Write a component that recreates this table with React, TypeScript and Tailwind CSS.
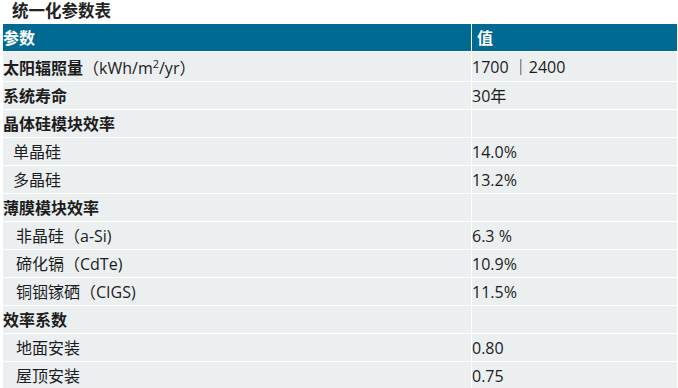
import React from 'react';

type Row = { label: React.ReactNode; value?: React.ReactNode; bold?: boolean; indent?: string; tall?: boolean };

const rows: Row[] = [
  {
    label: (
      <>
        <span className="font-bold">太阳辐照量</span>（kWh/m<span className="text-[11px] relative -top-[6px]">2</span>/yr）
      </>
    ),
    value: '1700 ｜2400',
    tall: true,
  },
  { label: '系统寿命', value: '30年', bold: true },
  { label: '晶体硅模块效率', bold: true },
  { label: '单晶硅', value: '14.0%', indent: 'pl-[10px]' },
  { label: '多晶硅', value: '13.2%', indent: 'pl-[10px]' },
  { label: '薄膜模块效率', bold: true },
  { label: '非晶硅（a-Si)', value: '6.3 %', indent: 'pl-[13px]' },
  { label: '碲化镉（CdTe)', value: '10.9%', indent: 'pl-[13px]' },
  { label: '铜铟镓硒（CIGS)', value: '11.5%', indent: 'pl-[13px]' },
  { label: '效率系数', bold: true },
  { label: '地面安装', value: '0.80', indent: 'pl-[13px]' },
  { label: '屋顶安装', value: '0.75', indent: 'pl-[13px]' },
];

export default function App() {
  return (
    <div
      className="w-[678px] h-[388px] overflow-hidden bg-white text-[16px] text-[#1c1c1c]"
      style={{ fontFamily: '"Open Sans", "Noto Sans CJK SC", sans-serif' }}
    >
      <div className="h-[24px] pl-[12px] pt-[1px] font-bold text-[16.5px] leading-[20px] text-[#222]">统一化参数表</div>
      <div className="ml-[3px] w-[674px] flex flex-col gap-px">
        <div className="flex gap-px h-[27px] items-center">
          <div className="w-[468px] h-full flex items-center bg-[#006a93] text-white font-bold">参数</div>
          <div className="flex-1 h-full flex items-center bg-[#006a93] text-white font-bold pl-[5px]">值</div>
        </div>
        {rows.map((r, i) => (
          <div key={i} className={`flex gap-px ${r.tall ? 'h-[29px]' : 'h-[27px]'}`}>
            <div
              className={`w-[468px] h-full flex items-center bg-[#ebeff0] leading-none ${r.bold ? 'font-bold' : ''} ${r.indent ?? ''}`}
            >
              <span className={r.tall ? 'pt-[3px]' : ''}>{r.label}</span>
            </div>
            <div className="flex-1 h-full flex items-center bg-[#ebeff0] leading-none">{r.value}</div>
          </div>
        ))}
      </div>
    </div>
  );
}
